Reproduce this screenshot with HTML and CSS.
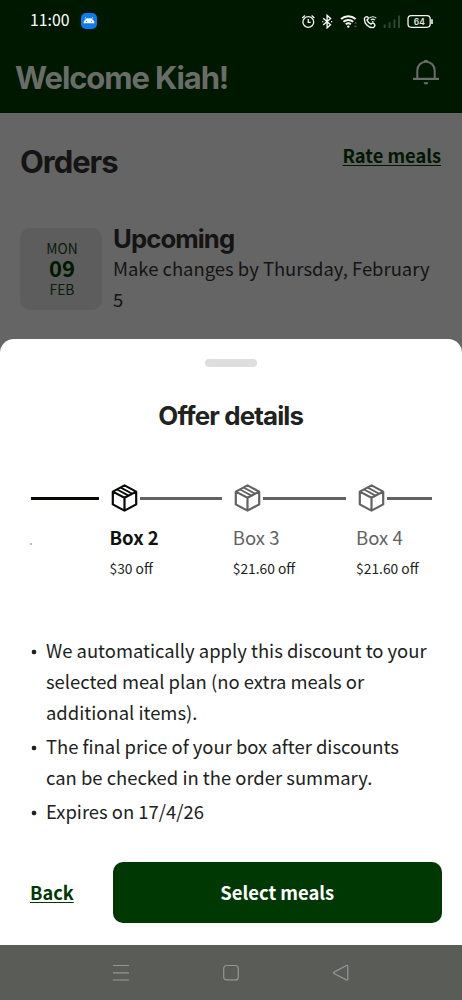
FILE: index.html
```html
<!DOCTYPE html>
<html lang="en">
<head>
<meta charset="utf-8">
<title>Offer details</title>
<link rel="stylesheet" href="styles.css">
</head>
<body>
<svg class="defs" width="0" height="0">
  <symbol id="box" viewBox="0 0 26 28">
    <g fill="none" stroke="currentColor" stroke-linejoin="round"><path d="M13 1.4 24.7 7.6v12.8L13 26.6 1.3 20.4V7.6z M1.3 7.6 13 13.8 24.7 7.6 M13 13.8v12.8" stroke-width="2.2"/><path d="M9.3 3.6 20.7 9.7 M5.6 5.5 17 11.6" stroke-width="1.8"/></g>
  </symbol>
</svg>
<div class="screen">
  <header class="header">
    <div class="status">
      <span class="clock">11:00</span>
      <svg class="droid" width="16" height="16" viewBox="0 0 16 16"><rect width="16" height="16" rx="5" fill="#0d7bf0"/><path d="M2.5 10.3a5.5 5 0 0 1 11 0z" fill="#fff"/><path d="m4.3 4.3 1.2 2m6.2-2-1.2 2" stroke="#fff" stroke-width=".9"/><circle cx="5.6" cy="8.3" r=".6" fill="#0d7bf0"/><circle cx="10.4" cy="8.3" r=".6" fill="#0d7bf0"/></svg>
      <svg class="indicators" width="132" height="16" viewBox="301 12 132 16" fill="none" stroke="#f2f5f2" stroke-width="1.3">
        <circle cx="308.3" cy="21" r="5.4"/><path d="M308.3 18v3.4h2.4M302.2 17l2.8-2.4M314.4 17l-2.8-2.4"/>
        <path d="m323.2 17.2 7.3 6.6-3.4 3V14.4l3.4 3-7.3 6.6" stroke-width="1.4"/><path d="M322.3 20.6h1M331 20.6h1.2"/>
        <path d="M341 18a11 11 0 0 1 14.6 0M343.4 20.8a7.4 7.4 0 0 1 9.8 0M345.7 23.3a4 4 0 0 1 5.2 0" stroke-width="1.9"/><circle cx="348.3" cy="25.6" r="1.2" fill="#f2f5f2" stroke="none"/><path d="m354 22.4 1.5-1.7 1.5 1.7zm0 2.4 1.5 1.7 1.5-1.7z" fill="#526252" stroke="none"/>
        <path d="M367.7 16.1c-1-1-3.3.1-3.3 1.9 0 4.7 3.6 8.6 8 8.6 2 0 3-2.2 2.2-3.4-1-1.3-2.6-1.5-3.6 0-1.8-.8-3.3-2.3-4-4.2 1.4-.7 1.7-1.9.7-2.9z" stroke-width="1.4"/><path d="M369.3 17.2a5 5 0 0 1 7 0M370.8 19a3 3 0 0 1 4 0" stroke-width="1.1"/><circle cx="372.8" cy="20.8" r=".9" fill="#f2f5f2" stroke="none"/>
        <path d="M384.7 27v-3.4M389.5 27v-5.8M394.4 27v-8.4M399 27V14.6" stroke="#344634" stroke-width="1.9"/>
        <rect x="408" y="14.7" width="22.2" height="11.6" rx="3.2"/><path d="M432 18.2v4.8" stroke-width="1.6"/>
        <text class="charge" x="419.3" y="23.7" text-anchor="middle">64</text>
      </svg>
    </div>
    <div class="greeting">
      <h1 class="welcome">Welcome Kiah!</h1>
      <svg class="bell" width="26" height="27" viewBox="0 0 26 27"><path d="M4.3 20v-8.6a8.7 8.7 0 0 1 17.4 0V20" fill="none" stroke="currentColor" stroke-width="2"/><path d="M0 18.7h26v2.2H0z M10.6 23.2h4.8a2.4 2.4 0 0 1-4.8 0z M10.7 3a2.3 2.3 0 0 1 4.6 0z" fill="currentColor"/></svg>
    </div>
  </header>
  <main class="orders">
    <div class="orders-head"><h2 class="orders-title">Orders</h2><a class="rate">Rate meals</a></div>
    <div class="order">
      <div class="date"><span>MON</span><b class="day">09</b><span>FEB</span></div>
      <div class="order-info"><h3 class="upcoming">Upcoming</h3><p class="deadline">Make changes by Thursday, February<br>5</p></div>
    </div>
  </main>
  <section class="sheet">
    <div class="handle"></div>
    <h2 class="sheet-title">Offer details</h2>
    <div class="track">
      <div class="step past"><div class="rail"><i class="line"></i></div><span class="stub"></span></div>
      <div class="step active"><div class="rail"><svg class="box"><use href="#box"/></svg><i class="line"></i></div><div class="name">Box 2</div><div class="off">$30 off</div></div>
      <div class="step"><div class="rail"><svg class="box"><use href="#box"/></svg><i class="line"></i></div><div class="name">Box 3</div><div class="off">$21.60 off</div></div>
      <div class="step last"><div class="rail"><svg class="box"><use href="#box"/></svg><i class="line"></i></div><div class="name">Box 4</div><div class="off">$21.60 off</div></div>
    </div>
    <ul class="terms">
      <li>We automatically apply this discount to your<br>selected meal plan (no extra meals or<br>additional items).</li>
      <li>The final price of your box after discounts<br>can be checked in the order summary.</li>
      <li>Expires on 17/4/26</li>
    </ul>
    <div class="actions"><a class="back">Back</a><button class="select">Select meals</button></div>
  </section>
  <nav class="navbar">
    <svg width="16" height="18" viewBox="0 0 16 18"><path d="M0 1.5h16M0 8.8h16M0 16h16"/></svg>
    <svg width="16" height="18" viewBox="0 0 16 18"><rect x=".7" y="1.5" width="14.6" height="14.4" rx="3"/></svg>
    <svg width="16" height="18" viewBox="0 0 16 18"><path d="M1 8.1 13.3 1.5q1.5-.5 1.5 1v12.4q0 1.5-1.5 1L1 9.5q-1-.7 0-1.4z"/></svg>
  </nav>
</div>
</body>
</html>
```
FILE: styles.css
```css
* { box-sizing: border-box; }
body, h1, h2, h3, p, ul { margin: 0; padding: 0; }
body { font-family: "Noto Sans CJK SC", "Noto Sans", sans-serif; color: #202220; }
.defs { position: absolute; }
.screen { width: 462px; height: 1000px; overflow: hidden; display: flex; flex-direction: column; background: #656565; }
h1, h2, h3 { font-family: Inter, sans-serif; font-weight: 700; white-space: nowrap; }
.header { height: 113px; flex: none; background: #001800; }
.status { height: 41px; display: flex; align-items: center; padding: 0 29px 0 30px; }
.clock { width: 51px; font-size: 15.8px; line-height: 20px; padding-bottom: 2px; color: #fff; }
.indicators { margin-left: auto; }
.charge { font: 600 8.5px Inter, sans-serif; fill: #e0e5e0; stroke: none; }
.greeting { display: flex; justify-content: space-between; padding: 17px 23px 0 15px; color: #6a6c6a; }
.welcome { font-size: 31px; line-height: 40px; letter-spacing: -1.1px; }
.bell { margin-top: 1px; }
.orders { height: 226px; flex: none; padding: 29px 21px 0 20px; color: #141414; }
.orders-head { display: flex; justify-content: space-between; height: 86px; }
.orders-title { font-size: 31px; line-height: 40px; letter-spacing: -1.05px; }
.rate { font-size: 18.3px; line-height: 26px; font-weight: 700; color: #001800; text-decoration: underline; text-decoration-thickness: 1px; text-underline-offset: 2px; }
.order { display: flex; gap: 11px; }
.date { width: 82px; height: 82px; border-radius: 10px; background: #5c5d5c; display: flex; flex-direction: column; align-items: center; padding: 10px 0 0 2px; font-size: 13.8px; line-height: 20px; color: #0b1b0c; }
.day { font-size: 22px; line-height: 19px; padding-bottom: 2px; color: #001800; }
.upcoming { font-size: 25.7px; line-height: 21px; padding-bottom: 4px; letter-spacing: -.9px; }
.deadline { font-size: 18.45px; line-height: 31px; white-space: nowrap; }
.sheet { height: 605.5px; flex: none; background: #fff; border-radius: 14px 14px 0 0; display: flex; flex-direction: column; padding: 20px 20.5px 0 30px; }
.handle { width: 52px; height: 8px; flex: none; border-radius: 4px; background: #dedede; margin-left: 175px; }
.sheet-title { font-size: 25.9px; line-height: 34px; letter-spacing: -.85px; margin: 32px 10px 0 0; text-align: center; }
.track { display: flex; width: 402px; height: 155px; margin-top: 51px; color: #626262; }
.step { width: 123.3px; flex: none; }
.past { width: 80px; color: #080a08; }
.past .line { flex: 0 0 68px; margin-left: 1px; }
.last { width: 75px; }
.rail { display: flex; align-items: center; gap: 2px; height: 28px; }
.step:not(.past) .rail { padding-left: 1px; }
.active .rail { color: #080a08; }
.box { width: 27px; height: 28px; flex: none; }
.line { flex: 1; height: 3px; background: currentColor; margin-right: 11px; }
.active .line { background: #626262; }
.last .line { margin-right: 0; }
.stub { display: block; width: 2px; height: 2px; background: #bbb; margin-top: 31px; }
.name { font-size: 18.5px; line-height: 28px; margin-top: 11px; margin-left: -.5px; }
.active .name { font-weight: 700; color: #101210; }
.off { font-size: 13.8px; line-height: 20px; margin-top: 6.5px; margin-left: -.5px; color: #202220; white-space: nowrap; }
.terms { list-style: none; font-size: 18.43px; line-height: 31px; white-space: nowrap; height: 227px; margin-top: -4px; }
.terms li { display: flow-root; padding-left: 16px; margin-bottom: 3px; background: radial-gradient(circle at 4px 17px, #202220 2px, transparent 2.7px); }
.actions { display: flex; align-items: center; height: 61px; }
.back { width: 83px; font-size: 18.2px; line-height: 28px; padding-bottom: 1px; font-weight: 700; color: #003804; text-decoration: underline; text-decoration-thickness: 1px; text-underline-offset: 2px; }
.select { flex: 1; height: 61px; border: 0; border-radius: 10px; background: #003804; color: #fff; font: 700 18.4px/28px "Noto Sans CJK SC", sans-serif; padding: 0 0 2px; }
.navbar { flex: 1; display: flex; justify-content: center; gap: 94px; padding-top: 19px; background: #5a5c58; fill: none; stroke: #959795; stroke-width: 1.2; }
```
